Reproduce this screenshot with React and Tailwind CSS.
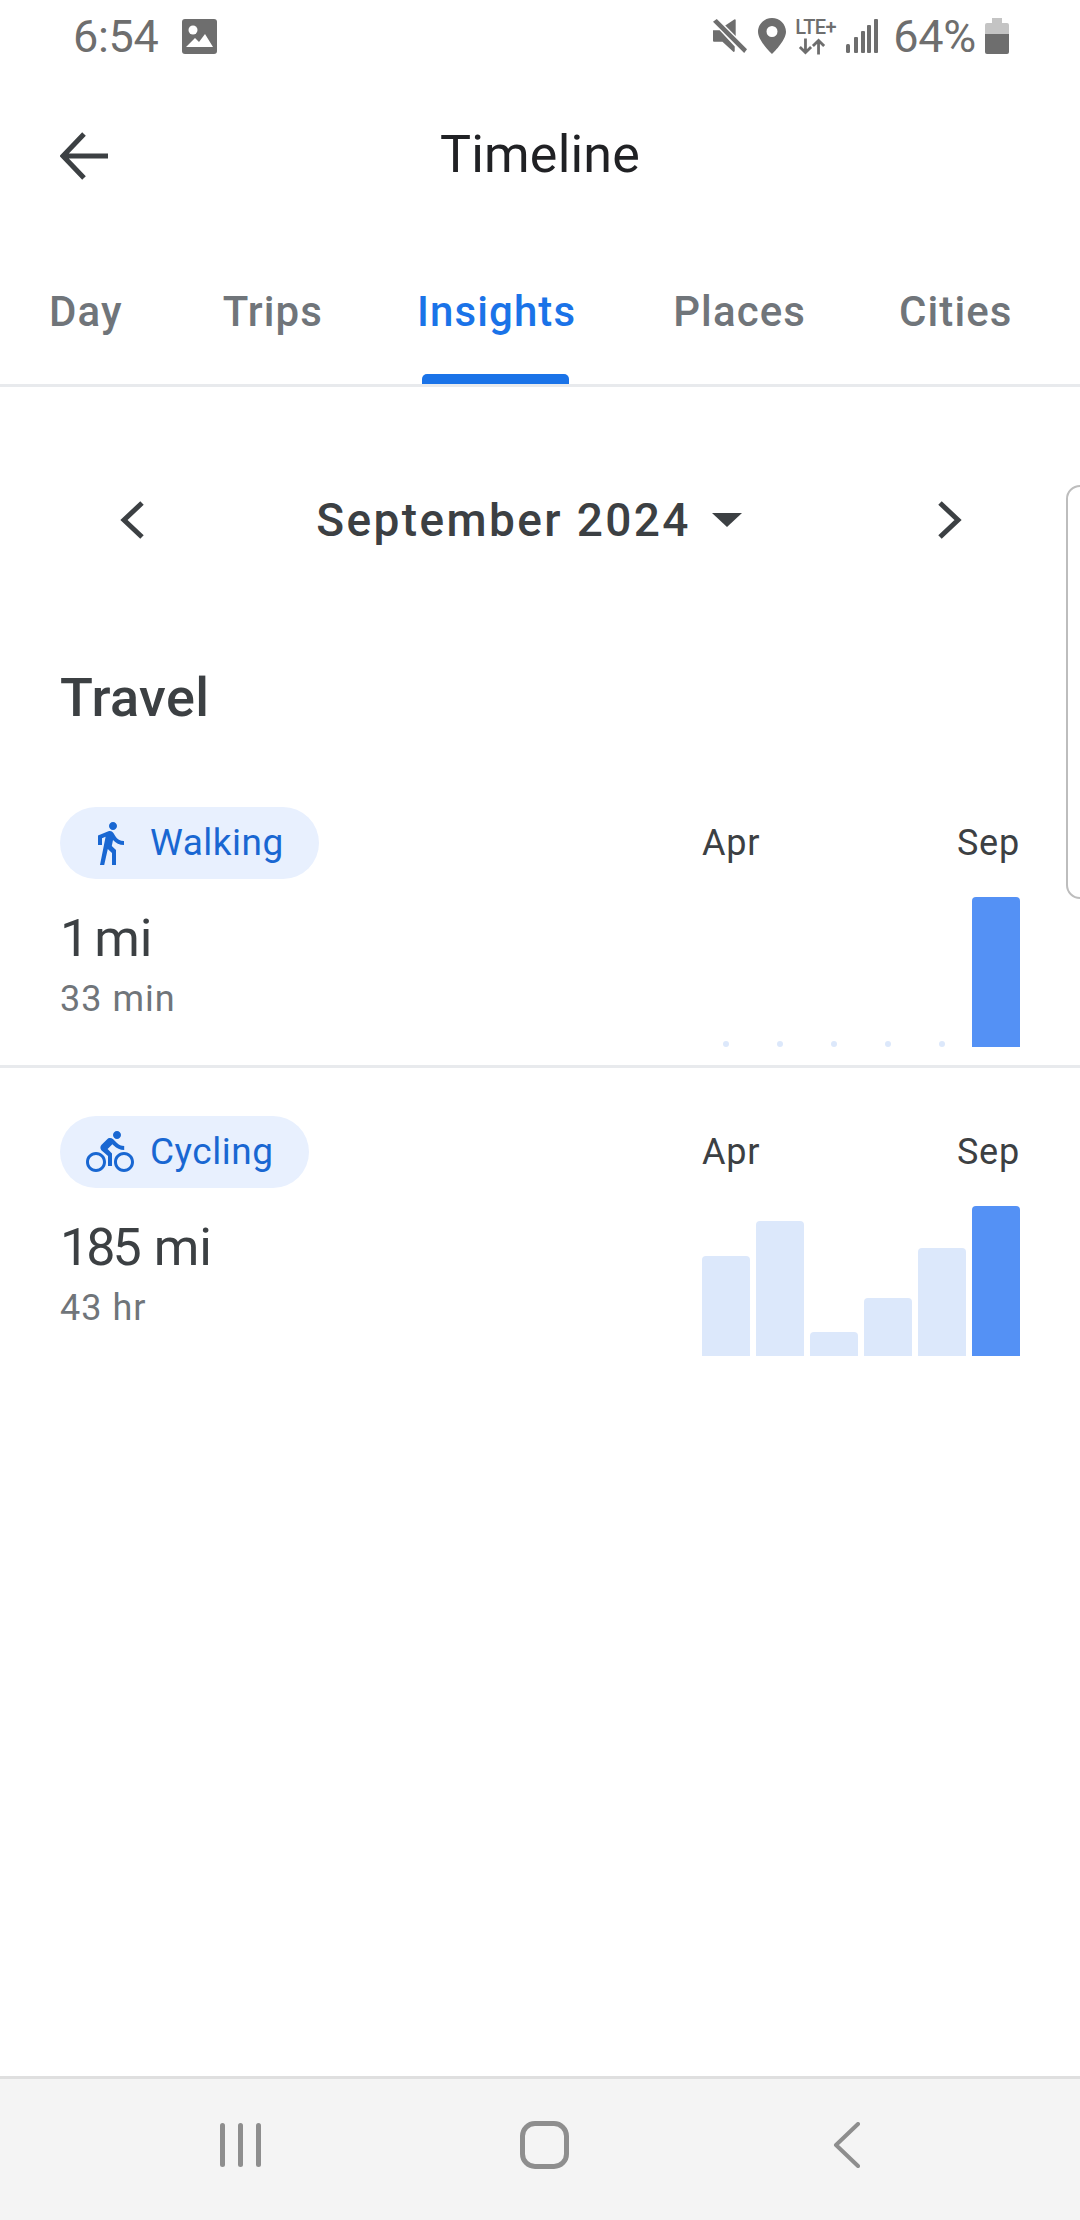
import React from "react";

const font = "font-['Roboto','Liberation_Sans',sans-serif]";

function Mute() {
  return (
    <svg width="34" height="36" viewBox="0 0 36 36" fill="#6e6e6e">
      <path d="M0 12h7l16 17v5a1 1 0 0 1-1.500.6L10 24H1a1 1 0 0 1-1-1z" />
      <path d="M24 1v17L13 7l9.500-6.600A1 1 0 0 1 24 1z" />
      <path d="M4 0l32 32-3 4L0 3z" />
    </svg>
  );
}

function StatusBar() {
  return (
    <div className="relative flex h-[72px] items-center text-[#6e6e6e]">
      <span className="ml-[73px] text-[45px] font-normal leading-none tracking-[-0.3px]">6:54</span>
      <svg className="ml-[23px]" width="35" height="35" viewBox="0 0 35 35">
        <rect width="35" height="35" rx="3" fill="#6e6e6e" />
        <circle cx="11" cy="11" r="4.500" fill="#fff" />
        <path d="M4 28l9-9 4 4 6-8 8 13z" fill="#fff" />
      </svg>
      <div className="ml-auto mr-[71px] flex items-center">
        <Mute />
        <svg className="ml-[11px]" width="28" height="36" viewBox="0 0 28 36">
          <path fillRule="evenodd" fill="#6e6e6e" d="M14 0C6.300 0 0 6.100 0 13.800 0 23 14 36 14 36s14-13 14-22.200C28 6.100 21.700 0 14 0zm0 19a5.500 5.500 0 1 1 0-11 5.500 5.500 0 0 1 0 11z" />
        </svg>
        <div className="ml-[9px] flex w-[43px] flex-col items-start">
          <span className="text-[20px] font-medium leading-[18px] tracking-[-0.6px]">LTE+</span>
          <svg className="ml-[3px] mt-[2px]" width="28" height="17" viewBox="0 0 30 17" fill="none" stroke="#6e6e6e" strokeWidth="3">
            <path d="M8 0v15M2 9l6 6 6-6M22 17V2M16 8l6-6 6 6" />
          </svg>
        </div>
        <svg className="ml-[8px]" width="32" height="34" viewBox="0 0 32 34" fill="#6e6e6e">
          <rect x="0" y="25" width="4" height="9" rx="1.500" />
          <rect x="8" y="18" width="4" height="16" rx="1" />
          <rect x="15" y="12" width="4" height="22" rx="1" />
          <rect x="21" y="6" width="4" height="28" rx="1" />
          <rect x="28" y="0" width="4" height="34" rx="1" />
        </svg>
        <span className="ml-[15px] text-[45px] font-normal leading-none tracking-[-0.3px]">64%</span>
        <svg className="ml-[9px]" width="24" height="36" viewBox="0 0 24 36">
          <path d="M7 0h10v5h5a2 2 0 0 1 2 2v9H0V7a2 2 0 0 1 2-2h5z" fill="#c4c4c4" />
          <path d="M0 16h24v18a2 2 0 0 1-2 2H2a2 2 0 0 1-2-2z" fill="#6e6e6e" />
        </svg>
      </div>
    </div>
  );
}

function Tabs() {
  return (
    <div className="relative flex h-[149px] items-start border-b-[3px] border-[#e8eaed] pt-[52px] text-[42px] font-medium leading-[44px] tracking-[1.100px] text-[#70757a]">
      <span className="ml-[49px]">Day</span>
      <span className="ml-[100px]">Trips</span>
      <span className="ml-[94px] text-[#1a73e8]">Insights</span>
      <span className="ml-[97px]">Places</span>
      <span className="ml-[93px]">Cities</span>
      <div className="absolute bottom-0 left-[422px] h-[10px] w-[147px] rounded-t-[5px] bg-[#1a73e8]" />
    </div>
  );
}

function MonthRow() {
  return (
    <div className="relative mt-[66px] flex h-[132px] items-center justify-between pl-[118px] pr-[116px] pt-[1px]">
      <svg width="28" height="40" viewBox="0 0 28 40" fill="none" stroke="#3c4043" strokeWidth="5">
        <path d="M24 3L6 20l18 17" />
      </svg>
      <div className="mr-[24px] flex items-center">
        <span className="text-[46px] font-medium leading-none tracking-[2.400px] text-[#3c4043]">September 2024</span>
        <svg className="ml-[21px]" width="30" height="14" viewBox="0 0 30 14" fill="#3c4043">
          <path d="M0 0h30L15 14z" />
        </svg>
      </div>
      <svg width="28" height="40" viewBox="0 0 28 40" fill="none" stroke="#3c4043" strokeWidth="5">
        <path d="M4 3l18 17L4 37" />
      </svg>
    </div>
  );
}

function WalkIcon() {
  return (
    <svg width="48" height="48" viewBox="0 0 24 24" fill="#1967d2">
      <path d="M13.500 5.500c1.100 0 2-.9 2-2s-.9-2-2-2-2 .9-2 2 .9 2 2 2zM9.800 8.900L7 23h2.100l1.800-8 2.100 2v6h2v-7.500l-2.100-2 .6-3C14.800 12 16.800 13 19 13v-2c-1.900 0-3.500-1-4.300-2.400l-1-1.600c-.4-.6-1-1-1.700-1-.3 0-.5.1-.8.1L6 8.300V13h2V9.600l1.800-.7" />
    </svg>
  );
}

function BikeIcon() {
  return (
    <svg width="48" height="48" viewBox="0 0 24 24" fill="#1967d2">
      <path d="M15.500 5.500c1.100 0 2-.9 2-2s-.9-2-2-2-2 .9-2 2 .9 2 2 2zM5 12c-2.800 0-5 2.200-5 5s2.200 5 5 5 5-2.200 5-5-2.200-5-5-5zm0 8.500c-1.900 0-3.500-1.600-3.500-3.500s1.600-3.500 3.500-3.500 3.500 1.600 3.500 3.500-1.600 3.500-3.500 3.500zm5.800-10l2.400-2.400.8.8c1.300 1.300 3 2.100 5.100 2.100V9c-1.500 0-2.700-.6-3.600-1.500l-1.900-1.900c-.5-.4-1-.6-1.600-.6s-1.100.2-1.400.6L7.800 8.400c-.4.4-.6.9-.6 1.400 0 .6.2 1.100.6 1.400L11 14v5h2v-6.200l-2.200-2.300zM19 12c-2.800 0-5 2.200-5 5s2.200 5 5 5 5-2.200 5-5-2.200-5-5-5zm0 8.500c-1.900 0-3.500-1.600-3.500-3.500s1.600-3.500 3.500-3.500 3.500 1.600 3.500 3.500-1.600 3.500-3.500 3.500z" />
    </svg>
  );
}

function Chart({ bars }) {
  return (
    <div className="flex w-[318px] flex-col justify-between">
      <div className="flex justify-between pt-[15px] text-[36px] leading-[42px] tracking-[0.800px] text-[#3c4043]">
        <span>Apr</span>
        <span>Sep</span>
      </div>
      <div className="flex h-[150px] items-end gap-[6px]">
        {bars.map((h, i) =>
          h === 0 ? (
            <div key={i} className="flex w-[48px] justify-center">
              <div className="h-[6px] w-[6px] rounded-full bg-[#dce8fb]" />
            </div>
          ) : (
            <div
              key={i}
              className={i === bars.length - 1 ? "w-[48px] rounded-t-[4px] bg-[#5491f5]" : "w-[48px] rounded-t-[4px] bg-[#dce8fb]"}
              style={{ height: h }}
            />
          )
        )}
      </div>
    </div>
  );
}

function TravelRow({ icon, label, pillClass, num, unitClass, time, bars, border }) {
  return (
    <div className={border ? "flex h-[309px] justify-between border-b-[3px] border-[#e8eaed] px-[60px] pt-[48px] pb-[18px]" : "flex h-[288px] justify-between px-[60px] pt-[48px]"}>
      <div>
        <div className={"flex h-[72px] items-center rounded-full bg-[#e8f0fe] pl-[26px] " + pillClass}>
          {icon}
          <span className="ml-[16px] text-[37px] tracking-[0.500px] text-[#1967d2]">{label}</span>
        </div>
        <div className="mt-[30px] text-[52px] leading-[60px] text-[#3c4043]">
          <span className="tracking-[-3px]">{num}</span>
          <span className={unitClass}>mi</span>
        </div>
        <div className="mt-[9px] text-[36px] leading-[42px] tracking-[1px] text-[#70757a]">{time}</div>
      </div>
      <Chart bars={bars} />
    </div>
  );
}

function NavBar() {
  return (
    <div className="flex h-[144px] items-center border-t-[3px] border-[#dfdfdf] bg-[#f4f4f4] pb-[10px]">
      <div className="ml-[220px] flex h-[44px] gap-[13px]">
        <div className="w-[5px] rounded-full bg-[#8e8e8e]" />
        <div className="w-[5px] rounded-full bg-[#8e8e8e]" />
        <div className="w-[5px] rounded-full bg-[#8e8e8e]" />
      </div>
      <div className="ml-[259px] h-[48px] w-[49px] rounded-[15px] border-[5px] border-[#8e8e8e]" />
      <svg className="ml-[264px]" width="28" height="46" viewBox="0 0 28 46" fill="none" stroke="#8e8e8e" strokeWidth="4" strokeLinecap="round" strokeLinejoin="round">
        <path d="M25 2L3 23l22 21" />
      </svg>
    </div>
  );
}

export default function App() {
  return (
    <div className={"relative flex h-[2220px] w-[1080px] flex-col overflow-hidden bg-white " + font}>
      <StatusBar />
      <div className="relative flex h-[166px] items-center justify-center">
        <svg className="absolute left-[60px] top-[60px]" width="48" height="48" viewBox="0 0 48 48" fill="none" stroke="#3c4043" strokeWidth="5">
          <path d="M48 24H4M24 2L3 24l21 22" />
        </svg>
        <h1 className="text-[52px] font-normal leading-none tracking-[0.200px] text-[#202124]">Timeline</h1>
      </div>
      <Tabs />
      <MonthRow />
      <div className="mt-[65px] h-[96px] pl-[60px] text-[54px] font-medium leading-[96px] tracking-[0.400px] text-[#3c4043]">Travel</div>
      <div className="mt-[13px] flex-1">
        <TravelRow
          icon={<WalkIcon />}
          label="Walking"
          pillClass="w-[259px]"
          num="1"
          unitClass="ml-[8px]"
          time="33 min"
          bars={[0, 0, 0, 0, 0, 150]}
          border
        />
        <TravelRow
          icon={<BikeIcon />}
          label="Cycling"
          pillClass="w-[249px]"
          num="185"
          unitClass="ml-[15px]"
          time="43 hr"
          bars={[100, 135, 24, 58, 108, 150]}
        />
      </div>
      <NavBar />
      <div className="absolute left-[1066px] top-[485px] h-[414px] w-[40px] rounded-l-[14px] border-2 border-[#bdbdbd] bg-white" />
    </div>
  );
}
